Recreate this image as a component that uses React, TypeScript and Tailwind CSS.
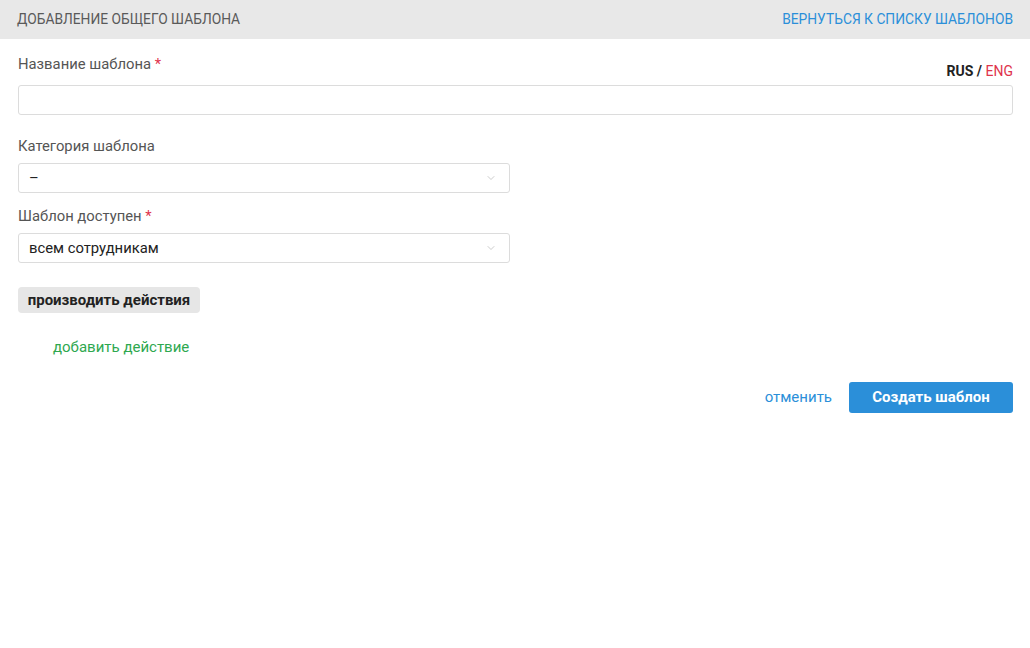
import { ChevronDown } from "lucide-react";

function Select({ value }: { value: string }) {
  return (
    <div className="flex h-[30px] w-[492px] items-center justify-between rounded-[3px] border border-[#dcdcdc] bg-white pl-[10px] pr-[12px] text-[14.8px] text-[#222]">
      <span>{value}</span>
      <ChevronDown size={12} strokeWidth={1.2} className="text-[#aaa]" />
    </div>
  );
}

export default function App() {
  return (
    <div className="min-h-[648px] w-[1030px] bg-white font-['Roboto',sans-serif]">
      <div className="flex h-[39px] items-center justify-between bg-[#e8e8e8] pl-[17px] pr-[17px] text-[13.8px] uppercase">
        <span className="text-[#5a5a5a]">Добавление общего шаблона</span>
        <a className="text-[#2b8fd9]">Вернуться к списку шаблонов</a>
      </div>

      <div className="pl-[18px] pr-[17px]">
        <div className="mt-[15px] flex items-start justify-between">
          <div className="text-[14.8px] leading-[20px] text-[#555]">
            Название шаблона <span className="text-[#e0344c]">*</span>
          </div>
          <div className="mt-[7px] text-[14px] leading-[20px] font-bold text-[#222]">
            RUS / <span className="font-normal text-[#e0344c]">ENG</span>
          </div>
        </div>
        <div className="mt-[4px] h-[30px] rounded-[3px] border border-[#dcdcdc] bg-white" />

        <div className="mt-[21px] text-[14.8px] leading-[20px] text-[#555]">Категория шаблона</div>
        <div className="mt-[7px]">
          <Select value="–" />
        </div>

        <div className="mt-[13px] text-[14.8px] leading-[20px] text-[#555]">
          Шаблон доступен <span className="text-[#e0344c]">*</span>
        </div>
        <div className="mt-[7px]">
          <Select value="всем сотрудникам" />
        </div>

        <div className="mt-[24px] flex h-[26px] w-[182px] items-center justify-center rounded-[4px] bg-[#e6e6e6] text-[15px] font-bold text-[#222]">
          производить действия
        </div>

        <div className="mt-[24px] pl-[35px] text-[15px] leading-[20px] text-[#2ea84f]">добавить действие</div>

        <div className="mt-[25px] flex items-center justify-end gap-[17px]">
          <a className="text-[15px] text-[#2b8fd9]">отменить</a>
          <button className="h-[31px] w-[164px] rounded-[3px] bg-[#2b8fd9] text-[15px] font-bold text-white">
            Создать шаблон
          </button>
        </div>
      </div>
    </div>
  );
}
